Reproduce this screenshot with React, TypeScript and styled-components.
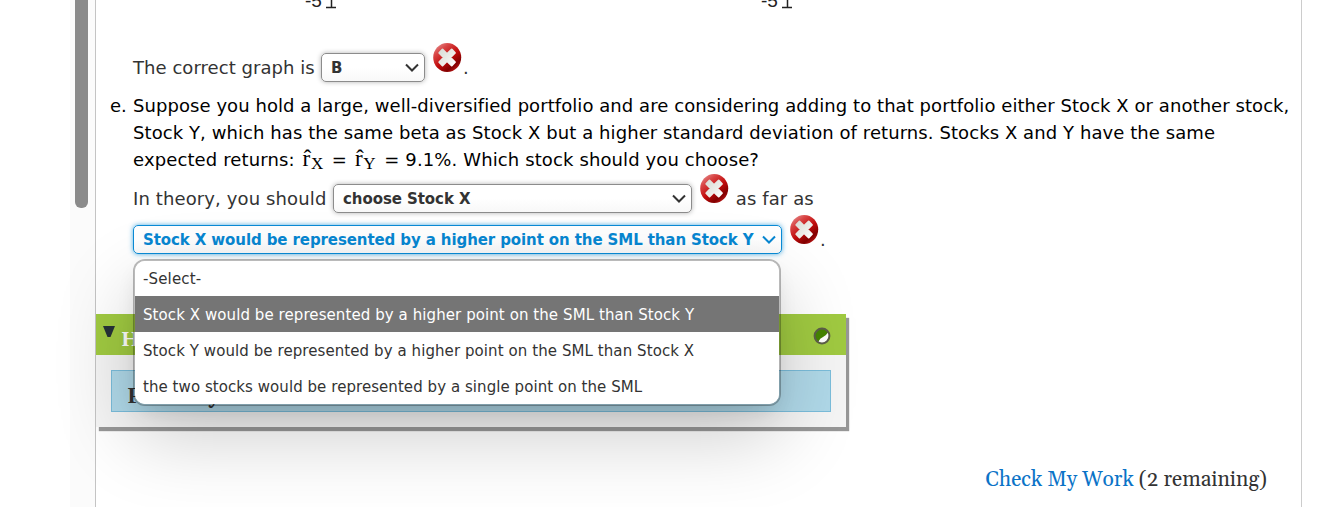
import React from "react";
import styled, { createGlobalStyle } from "styled-components";

const GlobalStyle = createGlobalStyle`
  * {
    box-sizing: border-box;
  }
  body {
    margin: 0;
    background: #fff;
    overflow: hidden;
  }
`;

const sans = `Verdana, "DejaVu Sans", sans-serif`;
const georgia = `Gelasio, Georgia, "DejaVu Serif", "Liberation Serif", serif`;

const Page = styled.div`
  width: 1335px;
  height: 507px;
  display: flex;
  padding-left: 70px;
  overflow: hidden;
  font-family: ${sans};
  font-size: 18px;
  color: #333;
`;

const ScrollTrack = styled.div`
  width: 25px;
  height: 507px;
  flex-shrink: 0;
  padding-left: 5px;
  background: #fbfbfb;
`;

const ScrollThumb = styled.div`
  width: 13px;
  height: 208px;
  border-radius: 0 0 6px 6px;
  background: #8b8b8b;
`;

const Content = styled.main`
  width: 1207px;
  height: 507px;
  flex-shrink: 0;
  display: flex;
  flex-direction: column;
  border-left: 1px solid #c4c4c4;
  border-right: 1px solid #ccc;
`;

const GraphRow = styled.div`
  height: 40px;
  flex-shrink: 0;
  display: flex;
  gap: 424px;
  padding-left: 208px;
`;

const AxisEnd = styled.svg`
  width: 32px;
  height: 12px;
  display: block;
  overflow: hidden;
`;

const Row = styled.div<{ $height: number; $pad?: number }>`
  height: ${(props) => props.$height}px;
  padding-top: ${(props) => props.$pad || 0}px;
  padding-left: 37px;
  flex-shrink: 0;
  display: flex;
  align-items: flex-start;
`;

const Text = styled.span<{ $width?: number; $spacing?: number; $left?: number }>`
  width: ${(props) => (props.$width ? `${props.$width}px` : "auto")};
  margin-top: 1px;
  margin-left: ${(props) => props.$left || 0}px;
  flex-shrink: 0;
  line-height: 27px;
  letter-spacing: ${(props) => props.$spacing || 0}px;
  white-space: pre;
`;

const SelectBox = styled.div<{ $width: number; $active?: boolean }>`
  position: relative;
  width: ${(props) => props.$width}px;
  height: 29px;
  flex-shrink: 0;
  display: flex;
  align-items: center;
  justify-content: space-between;
  padding: 0 5px 0 9px;
  border: 1px solid ${(props) => (props.$active ? "#0a8bd6" : "#8c8c8c")};
  border-radius: 5px;
  background: linear-gradient(#fff 50%, #f8f8f8);
  box-shadow: 0 0 5px
    ${(props) => (props.$active ? "rgba(0, 140, 215, 0.7)" : "rgba(0, 0, 0, 0.3)")};
  color: ${(props) => (props.$active ? "#0787d2" : "#333")};
  font-size: 15px;
  font-weight: bold;
`;

const SelectValue = styled.span<{ $spacing?: number }>`
  white-space: nowrap;
  letter-spacing: ${(props) => props.$spacing || 0}px;
`;

const Chevron = styled.svg`
  width: 14px;
  height: 9px;
  flex-shrink: 0;
  fill: none;
  stroke: currentColor;
  stroke-width: 2;
`;

const Menu = styled.ul`
  position: absolute;
  z-index: 2;
  top: 33px;
  left: -1px;
  width: 648px;
  height: 147px;
  margin: 0;
  padding: 0;
  list-style: none;
  overflow: hidden;
  background: #fff;
  background-clip: padding-box;
  border: 2px solid rgba(0, 0, 0, 0.27);
  border-radius: 12px;
  box-shadow: 0 30px 80px rgba(0, 0, 0, 0.2), 0 10px 22px -6px rgba(0, 0, 0, 0.12);
`;

const Option = styled.li<{ $selected?: boolean; $spacing: number }>`
  height: 36px;
  padding-left: 8px;
  line-height: 38px;
  font-weight: normal;
  font-size: 15px;
  letter-spacing: ${(props) => props.$spacing}px;
  white-space: nowrap;
  color: ${(props) => (props.$selected ? "#fff" : "#333")};
  background: ${(props) => (props.$selected ? "#757575" : "#fff")};
  &:first-child {
    height: 35px;
    line-height: 36px;
  }
`;

const WrongMark = styled.svg<{ $left: number }>`
  width: 29px;
  height: 30px;
  margin-left: ${(props) => props.$left}px;
  margin-top: -10px;
  flex-shrink: 0;
`;

const Question = styled.div`
  height: 81px;
  flex-shrink: 0;
  display: flex;
  padding-left: 14px;
  line-height: 27px;
  color: #000;
`;

const Marker = styled.div`
  width: 23px;
  flex-shrink: 0;
`;

const Line = styled.div<{ $spacing: number }>`
  height: 27px;
  white-space: nowrap;
  letter-spacing: ${(props) => props.$spacing}px;
`;

const MathText = styled.span`
  margin: 0 2px 0 2px;
  font-family: "Liberation Serif", serif;
  font-size: 23px;
  line-height: 1;
  letter-spacing: 0.8px;
  small {
    font-size: 17px;
    position: relative;
    top: 3px;
  }
`;

const Panel = styled.section`
  width: 750px;
  height: 113px;
  margin-top: 42px;
  flex-shrink: 0;
  background: #f5f5f5;
  box-shadow: 3px 4px 1px #979797;
  font-family: ${georgia};
  font-weight: bold;
`;

const PanelHeader = styled.div`
  height: 41px;
  display: flex;
  align-items: flex-start;
  padding: 12px 15px 0 7px;
  background: #a0ca41;
  color: #fff;
  font-size: 20px;
  line-height: 29px;
`;

const Triangle = styled.svg`
  width: 12px;
  height: 11px;
  flex-shrink: 0;
  margin-right: 6px;
`;

const HalfDot = styled.svg`
  width: 18px;
  height: 18px;
  margin: 1px 0 0 auto;
`;

const PanelItem = styled.div`
  height: 42px;
  margin: 15px;
  padding-left: 15px;
  border: 1px solid #7bbddb;
  background: #b0d9e9;
  font-size: 21px;
  line-height: 53px;
  overflow: hidden;
`;

const Footer = styled.div`
  margin-top: 39px;
  padding-right: 34px;
  text-align: right;
  font-family: ${georgia};
  font-size: 21px;
  font-variant-numeric: oldstyle-nums;
  line-height: 29px;
  white-space: nowrap;
`;

const CheckLink = styled.a`
  color: #0b73c7;
`;

const options = [
  { label: "-Select-", spacing: 0.15 },
  {
    label: "Stock X would be represented by a higher point on the SML than Stock Y",
    spacing: 0.08,
  },
  {
    label: "Stock Y would be represented by a higher point on the SML than Stock X",
    spacing: 0.08,
  },
  {
    label: "the two stocks would be represented by a single point on the SML",
    spacing: 0.06,
  },
];

const Axis = () => (
  <AxisEnd viewBox="0 0 32 12">
    <text x="1" y="6.5" fontFamily="Liberation Sans, sans-serif" fontSize="19" fill="#222">
      -5
    </text>
    <path d="M27.5 0V7M22 7.5H32" fill="none" stroke="#222" strokeWidth="1.5" />
  </AxisEnd>
);

const Arrow = () => (
  <Chevron viewBox="0 0 14 9">
    <path d="M1 1.5 7 7.5 13 1.5" />
  </Chevron>
);

const Wrong = () => (
  <WrongMark $left={8} viewBox="0 0 29 30">
    <defs>
      <linearGradient id="ball" x1="0" y1="0" x2="0.75" y2="1">
        <stop offset="0" stopColor="#eaa6a6" />
        <stop offset="0.3" stopColor="#d84444" />
        <stop offset="0.6" stopColor="#c00c0c" />
        <stop offset="0.85" stopColor="#820000" />
        <stop offset="1" stopColor="#c01818" />
      </linearGradient>
      <linearGradient id="cross" x1="0" y1="0" x2="1" y2="1">
        <stop offset="0" stopColor="#d8dcd5" />
        <stop offset="0.6" stopColor="#eeeeea" />
        <stop offset="1" stopColor="#fff" />
      </linearGradient>
    </defs>
    <ellipse cx="14.2" cy="14.5" rx="14" ry="14.5" fill="url(#ball)" />
    <path
      d="M9.5 6.5 14 11 18.7 6.5 22 9.8 17.5 14.5 22 19.2 18.7 22.5 14 18 9.5 22.5 6.2 19.2 10.8 14.5 6.2 9.8Z"
      fill="url(#cross)"
      stroke="url(#cross)"
      strokeWidth="1.8"
      strokeLinejoin="round"
    />
  </WrongMark>
);

const App = () => {
  return (
    <>
      <GlobalStyle />
      <Page>
        <ScrollTrack>
          <ScrollThumb />
        </ScrollTrack>
        <Content>
          <GraphRow>
            <Axis />
            <Axis />
          </GraphRow>
          <Row $height={52} $pad={13}>
            <Text $width={188} $spacing={0.05}>
              The correct graph is
            </Text>
            <SelectBox $width={104}>
              <SelectValue>B</SelectValue>
              <Arrow />
            </SelectBox>
            <Wrong />
            <Text $left={1}>.</Text>
          </Row>
          <Question>
            <Marker>e.</Marker>
            <div>
              <Line $spacing={0.065}>
                Suppose you hold a large, well-diversified portfolio and are
                considering adding to that portfolio either Stock X or another
                stock,
              </Line>
              <Line $spacing={0.08}>
                Stock Y, which has the same beta as Stock X but a higher standard
                deviation of returns. Stocks X and Y have the same
              </Line>
              <Line $spacing={0.12}>
                expected returns:{" "}
                <MathText>
                  r̂<small>X</small>
                </MathText>{" "}
                ={" "}
                <MathText>
                  r̂<small>Y</small>
                </MathText>{" "}
                = 9.1%. Which stock should you choose?
              </Line>
            </div>
          </Question>
          <Row $height={52} $pad={11}>
            <Text $width={200} $spacing={0.12}>
              In theory, you should
            </Text>
            <SelectBox $width={359}>
              <SelectValue $spacing={-0.07}>choose Stock X</SelectValue>
              <Arrow />
            </SelectBox>
            <Wrong />
            <Text $left={1} $spacing={0.1}>
              {" as far as"}
            </Text>
          </Row>
          <Row $height={47}>
            <SelectBox $width={649} $active>
              <SelectValue $spacing={-0.1}>
                Stock X would be represented by a higher point on the SML than
                Stock Y
              </SelectValue>
              <Arrow />
              <Menu>
                {options.map((option, index) => (
                  <Option
                    key={option.label}
                    $selected={index === 1}
                    $spacing={option.spacing}
                  >
                    {option.label}
                  </Option>
                ))}
              </Menu>
            </SelectBox>
            <Wrong />
            <Text $left={1}>.</Text>
          </Row>
          <Panel>
            <PanelHeader>
              <Triangle viewBox="0 0 12 11">
                <path d="M0 0H12L7.5 11H4.5Z" fill="#263238" />
              </Triangle>
              <span>Hide Feedback</span>
              <HalfDot viewBox="0 0 18 18">
                <circle cx="9" cy="9" r="7.4" fill="#fff" />
                <path d="M15.2 5A7.4 7.4 0 1 0 5 15.2Q7 11 10 10T15.2 5Z" fill="#458500" />
                <circle cx="9" cy="9" r="7.4" fill="none" stroke="#5d5f48" strokeWidth="2" />
              </HalfDot>
            </PanelHeader>
            <PanelItem>Partially Correct</PanelItem>
          </Panel>
          <Footer>
            <CheckLink>Check My Work</CheckLink> (2 remaining)
          </Footer>
        </Content>
      </Page>
    </>
  );
};

export default App;
